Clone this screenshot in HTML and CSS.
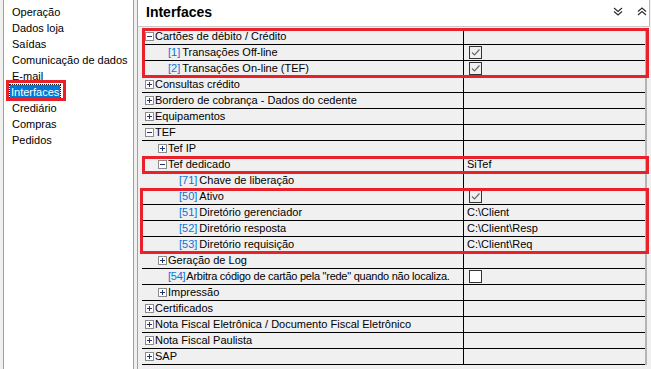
FILE: index.html
```html
<!DOCTYPE html>
<html lang="pt-BR">
<head>
    <meta charset="UTF-8">
    <meta name="viewport" content="width=device-width, initial-scale=1.0">
    <title>Configurações - Interfaces</title>
    <link rel="stylesheet" href="styles.css">
</head>
<body>
    <div class="window">
        <ul class="nav">
            <li>Operação</li>
            <li>Dados loja</li>
            <li>Saídas</li>
            <li>Comunicação de dados</li>
            <li>E-mail</li>
            <li><span class="sel">Interfaces</span></li>
            <li>Crediário</li>
            <li>Compras</li>
            <li>Pedidos</li>
        </ul>

        <section class="main">
            <header class="head">
                <h1>Interfaces</h1>
                <div class="tools">
                    <svg class="tool" viewBox="0 0 10 9"><path d="M1 1l4 3.5L9 1M1 4.5L5 8l4-3.5"/></svg>
                    <svg class="tool" viewBox="0 0 10 9"><path d="M1 8L5 4.5 9 8M1 4.5L5 1l4 3.5"/></svg>
                </div>
            </header>

            <div class="grid">
                <div class="mark">
                    <div class="row"><div class="name l0"><i class="exp"></i>Cartões de débito / Crédito</div><div class="val"></div></div>
                    <div class="row"><div class="name l1"><i class="leaf"></i><span class="num">[1]</span>Transações Off-line</div><div class="val"><span class="chk"><svg viewBox="0 0 11 11"><path d="M2 5.5l2.5 2.5L9.5 2.5"/></svg></span></div></div>
                    <div class="row"><div class="name l1"><i class="leaf"></i><span class="num">[2]</span>Transações On-line (TEF)</div><div class="val"><span class="chk"><svg viewBox="0 0 11 11"><path d="M2 5.5l2.5 2.5L9.5 2.5"/></svg></span></div></div>
                </div>
                <div class="row"><div class="name l0"><i class="exp plus"></i>Consultas crédito</div><div class="val"></div></div>
                <div class="row"><div class="name l0"><i class="exp plus"></i>Bordero de cobrança - Dados do cedente</div><div class="val"></div></div>
                <div class="row"><div class="name l0"><i class="exp plus"></i>Equipamentos</div><div class="val"></div></div>
                <div class="row"><div class="name l0"><i class="exp"></i>TEF</div><div class="val"></div></div>
                <div class="row"><div class="name l1"><i class="exp plus"></i>Tef IP</div><div class="val"></div></div>
                <div class="mark">
                    <div class="row"><div class="name l1"><i class="exp"></i>Tef dedicado</div><div class="val">SiTef</div></div>
                </div>
                <div class="row"><div class="name l2"><i class="leaf"></i><span class="num">[71]</span>Chave de liberação</div><div class="val"></div></div>
                <div class="mark wide">
                    <div class="row"><div class="name l2"><i class="leaf"></i><span class="num">[50]</span>Ativo</div><div class="val"><span class="chk"><svg viewBox="0 0 11 11"><path d="M2 5.5l2.5 2.5L9.5 2.5"/></svg></span></div></div>
                    <div class="row"><div class="name l2"><i class="leaf"></i><span class="num">[51]</span>Diretório gerenciador</div><div class="val">C:\Client</div></div>
                    <div class="row"><div class="name l2"><i class="leaf"></i><span class="num">[52]</span>Diretório resposta</div><div class="val">C:\Client\Resp</div></div>
                    <div class="row"><div class="name l2"><i class="leaf"></i><span class="num">[53]</span>Diretório requisição</div><div class="val">C:\Client\Req</div></div>
                </div>
                <div class="row"><div class="name l1"><i class="exp plus"></i>Geração de Log</div><div class="val"></div></div>
                <div class="row"><div class="name l1 tight"><i class="leaf"></i><span class="num">[54]</span>Arbitra código de cartão pela "rede" quando não localiza.</div><div class="val"><span class="chk off"></span></div></div>
                <div class="row"><div class="name l1"><i class="exp plus"></i>Impressão</div><div class="val"></div></div>
                <div class="row"><div class="name l0"><i class="exp plus"></i>Certificados</div><div class="val"></div></div>
                <div class="row"><div class="name l0"><i class="exp plus"></i>Nota Fiscal Eletrônica / Documento Fiscal Eletrônico</div><div class="val"></div></div>
                <div class="row"><div class="name l0"><i class="exp plus"></i>Nota Fiscal Paulista</div><div class="val"></div></div>
                <div class="row"><div class="name l0"><i class="exp plus"></i>SAP</div><div class="val"></div></div>
            </div>
        </section>
    </div>
</body>
</html>
```

FILE: styles.css
```css
body {
    margin: 0;
    background-color: #f0f0f0;
    font-family: "Liberation Sans", Arial, sans-serif;
    font-size: 11px;
    color: #000;
    overflow: hidden;
}

.window {
    display: flex;
    height: 369px;
}

/* Left menu */
.nav {
    list-style: none;
    margin: 0 0 0 3px;
    padding: 4px 0 0 6px;
    width: 131px;
    box-sizing: border-box;
    background-color: #fff;
    border-left: 1px solid #a0a0a0;
    border-right: 1px solid #a0a0a0;
}

.nav li {
    height: 16px;
    line-height: 16px;
    padding-left: 2px;
}

.nav .sel {
    position: relative;
    display: inline-block;
    margin-left: -2px;
    padding: 0 1px;
    line-height: 14px;
    margin-top: 1px;
    background-color: #0078d7;
    color: #fff;
    outline: 1px dotted #1b1b1b;
}

/* red annotation */
.nav .sel::after {
    content: "";
    position: absolute;
    top: -5px;
    left: -4px;
    right: -6px;
    bottom: -2px;
    border: 3px solid #e8212b;
}

/* Right side */
.main {
    flex: 1;
    margin-left: 3px;
    border-left: 1px solid #a0a0a0;
}

.head {
    display: flex;
    align-items: flex-start;
    justify-content: space-between;
    height: 26px;
    margin-right: 1px;
    background-color: #fff;
    border-right: 1px solid #b9b9b9;
    border-bottom: 1px solid #c8c8c8;
}

.head h1 {
    margin: 0;
    padding: 4px 0 0 8px;
    font-size: 14px;
    line-height: 16px;
    font-weight: bold;
}

.tools {
    display: flex;
    gap: 14px;
    padding: 7px 2px 0 0;
}

.tool {
    width: 10px;
    height: 9px;
    fill: none;
    stroke: #2b2b2b;
    stroke-width: 1.1;
}

.grid {
    margin: 2px 0 0 4px;
    width: 505px;
    border-right: 2px solid #b4b4b4;
    box-sizing: border-box;
}

.row {
    display: flex;
    height: 16px;
    border-bottom: 1px solid #000;
    box-sizing: border-box;
}

.name {
    display: flex;
    align-items: center;
    width: 322px;
    flex: none;
    box-sizing: border-box;
    border-right: 1px solid #000;
    white-space: nowrap;
    overflow: hidden;
    line-height: 15px;
}

.name.tight {
    letter-spacing: -0.25px;
}

.l0 { padding-left: 3px; }
.l1 { padding-left: 16px; }
.l2 { padding-left: 27px; }

.exp {
    flex: none;
    width: 9px;
    height: 9px;
    margin-right: 1px;
    box-sizing: border-box;
    border: 1px solid #8c8c8c;
    background: #fff linear-gradient(#23336e, #23336e) center / 5px 1px no-repeat;
}

.exp.plus {
    background:
        linear-gradient(#23336e, #23336e) center / 5px 1px no-repeat,
        linear-gradient(#23336e, #23336e) center / 1px 5px no-repeat,
        #fff;
}

.leaf {
    flex: none;
    width: 10px;
}

.num {
    color: #0a74da;
    margin-right: 2px;
}

.tight .num {
    margin-right: 1px;
}

.val {
    flex: 1;
    display: flex;
    align-items: center;
    padding-left: 3px;
    line-height: 15px;
    white-space: nowrap;
}

.chk {
    display: block;
    width: 13px;
    height: 13px;
    margin-left: 2px;
    box-sizing: border-box;
    border: 1px solid #333;
}

.chk svg {
    display: block;
    width: 11px;
    height: 11px;
    fill: none;
    stroke: #6a6a6a;
    stroke-width: 1.2;
}

.chk.off {
    background-color: #fff;
}

/* red annotation boxes around rows */
.mark {
    position: relative;
}

.mark::after {
    content: "";
    position: absolute;
    top: -1px;
    left: 0;
    right: -4px;
    bottom: -1px;
    border: 3px solid #e8212b;
}

.mark.wide::after {
    left: -2px;
}
```
